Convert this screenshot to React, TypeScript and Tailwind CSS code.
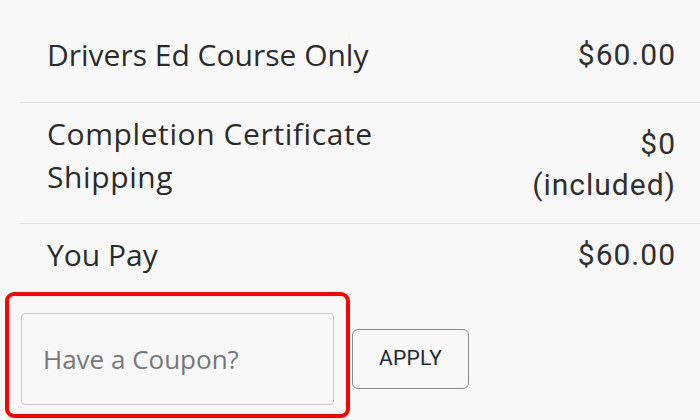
export default function App() {
  const label = "font-['Open_Sans',sans-serif] text-[30px] leading-[43px] text-[#2b2b2b]";
  const price = "font-['Roboto',sans-serif] text-[30px] leading-[41px] text-[#303030] text-right tracking-[1px]";

  return (
    <div className="w-[700px] h-[420px] overflow-hidden bg-[#f8f8f8]">
      <div className="pl-5">
        {/* Line items */}
        <div className="flex justify-between items-center h-[103px] pl-[27px] pr-6 pt-[6px] border-b border-[#e0e0e0]">
          <span className={label}>Drivers Ed Course Only</span>
          <span className={price}>$60.00</span>
        </div>
        <div className="flex justify-between items-start h-[121px] pl-[27px] pr-6 border-b border-[#e0e0e0]">
          <div className={`${label} pt-[9px] tracking-[0.6px]`}>
            Completion Certificate
            <br />
            Shipping
          </div>
          <div className={`${price} pt-[20px]`}>
            $0
            <br />
            (included)
          </div>
        </div>
        <div className="flex justify-between items-center h-[64px] pl-[27px] pr-6 pb-[3px]">
          <span className={label}>You Pay</span>
          <span className={price}>$60.00</span>
        </div>
      </div>

      {/* Coupon */}
      <div className="flex items-start gap-[2px] pl-[5px] mt-[4px]">
        <div className="border-4 border-[#ff0000] rounded-[9px] px-3 pt-[17px] pb-[9px]">
          <input
            placeholder="Have a Coupon?"
            className="w-[313px] h-[92px] px-[21px] border border-[#c8c8c8] rounded-[4px] bg-[#f8f8f8] font-['Open_Sans',sans-serif] text-[26px] text-[#2b2b2b] placeholder:text-[#777777] outline-none"
          />
        </div>
        <button className="w-[117px] h-[60px] mt-[37px] border border-[#8a8a8a] rounded-[6px] bg-[#f8f8f8] font-['Roboto',sans-serif] text-[21px] text-[#222a33] tracking-[0.3px]">
          APPLY
        </button>
      </div>
    </div>
  );
}
